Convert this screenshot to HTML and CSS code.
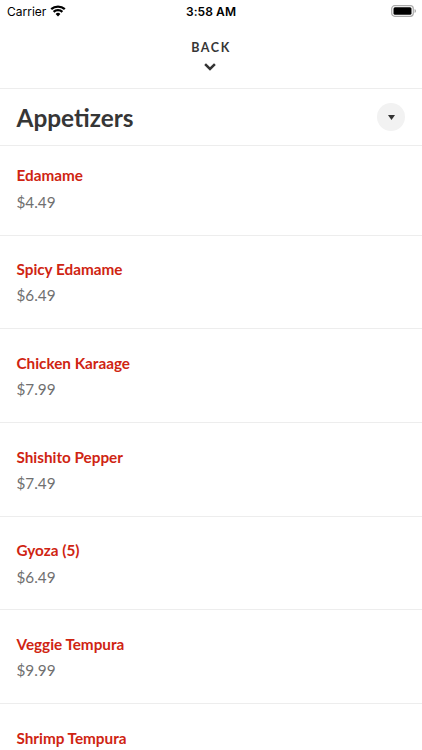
FILE: index.html
```html
<!DOCTYPE html>
<html lang="en">
<head>
<meta charset="utf-8">
<title>Appetizers</title>
<link rel="stylesheet" href="styles.css">
</head>
<body>
<div class="status">
  <div class="carrier"><span>Carrier</span>
    <svg class="wifi" width="16" height="12" viewBox="0 0 16 12"><path d="M1.200 4.200a10 10 0 0 1 13.600 0M3.600 6.900a6.400 6.400 0 0 1 8.800 0" fill="none" stroke="#000" stroke-width="2.300"/><path d="M5.600 9a3.500 3.500 0 0 1 4.800 0L8 11.400z"/></svg>
  </div>
  <div class="time">3:58 AM</div>
  <div class="battery">
    <svg width="25" height="12" viewBox="0 0 25 12"><rect x=".7" y=".7" width="21.600" height="10.600" rx="3" fill="none" stroke="#aaa" stroke-width="1.200"/><rect x="2.500" y="2.300" width="18" height="7.400" rx="1.500"/><path d="M23.600 4v4q1.300-.6 1.300-2t-1.300-2" fill="#999"/></svg>
  </div>
</div>
<div class="back">
  <span class="back-label">BACK</span>
  <svg width="12" height="8" viewBox="0 0 12 8"><path d="M1.100 1.200 6 6l4.900-4.800" fill="none" stroke="#333" stroke-width="2.500"/></svg>
</div>
<header class="heading">
  <h1>Appetizers</h1>
  <div class="toggle"><svg width="7" height="5" viewBox="0 0 7 5"><path d="M0 0h7L3.500 5z" fill="#333"/></svg></div>
</header>
<ul class="menu">
  <li><h2>Edamame</h2><p>$4.49</p></li>
  <li><h2>Spicy Edamame</h2><p>$6.49</p></li>
  <li><h2>Chicken Karaage</h2><p>$7.99</p></li>
  <li><h2>Shishito Pepper</h2><p>$7.49</p></li>
  <li><h2>Gyoza (5)</h2><p>$6.49</p></li>
  <li><h2>Veggie Tempura</h2><p>$9.99</p></li>
  <li><h2>Shrimp Tempura</h2></li>
</ul>
</body>
</html>
```
FILE: styles.css
```css
* { box-sizing: border-box; margin: 0; padding: 0; }
body { height: 750px; overflow: hidden; background: #fff; font-family: Lato, sans-serif; color: #363636; }
svg { display: block; }
.status { display: grid; grid-template-columns: 1fr auto 1fr; align-items: center; height: 22px; padding: 0 6px 0 7px; font-family: Inter, sans-serif; font-size: 12px; color: #000; }
.carrier { display: flex; align-items: center; gap: 4px; }
.wifi { margin-top: -1px; }
.time { font-weight: 600; letter-spacing: .1px; margin-right: 1px; }
.battery { justify-self: end; margin-top: -1px; }
.back { display: flex; flex-direction: column; align-items: center; height: 66px; padding: 17.500px 2px 0 0; }
.back-label { font-size: 12.500px; line-height: 15px; font-weight: 700; letter-spacing: 1.6px; margin: 0 -2px 8px 0; }
.heading { display: flex; align-items: center; justify-content: space-between; height: 58px; padding: 0 17px 0 16.500px; border-top: 1px solid #ededed; border-bottom: 1px solid #ededed; }
h1 { font-size: 24.400px; line-height: 30px; font-weight: 700; padding-top: 2px; }
.toggle { width: 28px; height: 28px; border-radius: 50%; background: #f2f2f2; display: flex; align-items: center; justify-content: center; }
.menu { list-style: none; height: 604px; overflow: hidden; }
.menu li { height: 93.700px; padding: 23.600px 16.500px 0; border-bottom: 1px solid #ededed; }
.menu li:first-child { height: 89.700px; padding-top: 19.400px; }
h2 { font-size: 15.300px; line-height: 20px; font-weight: 700; letter-spacing: -.02px; color: #cf2412; }
.menu p { font-size: 15.300px; line-height: 20px; color: #707070; margin-top: 6.200px; }
```
